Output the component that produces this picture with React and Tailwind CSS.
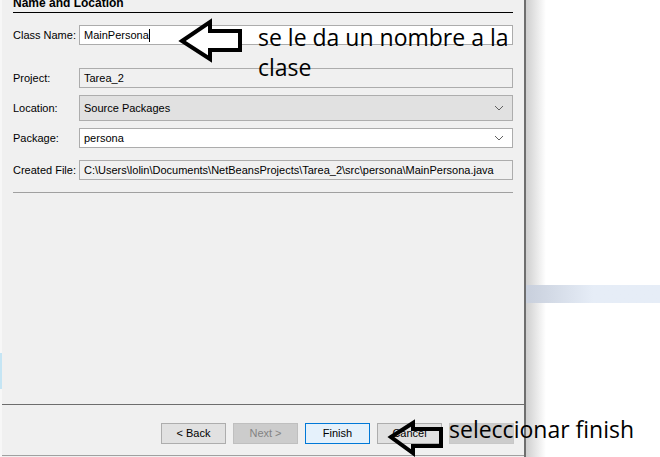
import React from "react";

const lbl = "w-[66px] shrink-0 whitespace-nowrap";
const field = "flex-1 min-w-0 h-[20px] border border-[#acacac] flex items-center px-[4px] whitespace-nowrap overflow-hidden";

function Chevron() {
  return (
    <svg width="10" height="6" viewBox="0 0 10 6" className="ml-auto mr-[4px] shrink-0">
      <path d="M1 1 L5 5 L9 1" fill="none" stroke="#606060" strokeWidth="1" />
    </svg>
  );
}

function Btn({ children, cls }) {
  return (
    <div className={"h-[21px] w-[65px] border flex items-center justify-center " + cls}>
      {children}
    </div>
  );
}

export default function App() {
  return (
    <div
      className="relative w-[660px] h-[457px] bg-white overflow-hidden flex text-[11px] text-black"
      style={{ fontFamily: "'Liberation Sans', Arial, sans-serif" }}
    >
      {/* left edge strip */}
      <div className="w-[2px] shrink-0 bg-[#f7f7f7] flex flex-col">
        <div className="h-[353px]" />
        <div className="h-[36px] bg-[#c5e5f4]" />
      </div>

      {/* dialog window */}
      <div className="w-[524px] shrink-0 bg-[#f0f0f0] border-r-2 border-[#6e6e6e] flex flex-col">
        <div className="px-[11px] flex flex-col">
          <div className="mt-[-3px] h-[16px] font-bold text-[12px] border-b border-black leading-[13px]">
            Name and Location
          </div>
          <div className="flex items-center mt-[12px]">
            <span className={lbl}>Class Name:</span>
            <div className={field + " bg-white"}>
              MainPersona<span className="w-px h-[13px] bg-black" />
            </div>
          </div>
          <div className="flex items-center mt-[23px]">
            <span className={lbl}>Project:</span>
            <div className={field + " bg-[#f0f0f0]"}>Tarea_2</div>
          </div>
          <div className="flex items-center mt-[7px]">
            <span className={lbl}>Location:</span>
            <div className="flex-1 h-[26px] border border-[#adadad] bg-[#e1e1e1] flex items-center px-[4px]">
              Source Packages
              <Chevron />
            </div>
          </div>
          <div className="flex items-center mt-[7px]">
            <span className={lbl}>Package:</span>
            <div className={field + " bg-white"}>
              persona
              <Chevron />
            </div>
          </div>
          <div className="flex items-center mt-[12px]">
            <span className={lbl}>Created File:</span>
            <div className={field + " bg-[#f0f0f0]"}>
              C:\Users\lolin\Documents\NetBeansProjects\Tarea_2\src\persona\MainPersona.java
            </div>
          </div>
          <div className="mt-[12px] h-px bg-[#a0a0a0]" />
        </div>

        <div className="flex-1" />
        <div className="h-px bg-[#6d6d6d]" />
        <div className="flex gap-[7px] pl-[159px] mt-[18px]">
          <Btn cls="border-[#adadad] bg-[#e1e1e1]">&lt; Back</Btn>
          <Btn cls="border-[#bfbfbf] bg-[#cccccc] text-[#838383]">Next &gt;</Btn>
          <Btn cls="border-[#0078d7] bg-[#e5f1fb]">Finish</Btn>
          <Btn cls="border-[#adadad] bg-[#e1e1e1]">Cancel</Btn>
          <Btn cls="border-[#c8c8c8] bg-[#cccccc]"> </Btn>
        </div>
        <div className="mt-[11px] h-px bg-[#a0a0a0]" />
        <div className="h-[1px]" />
      </div>

      {/* right backdrop */}
      <div className="flex-1 relative">
        <div className="absolute left-0 top-0 bottom-0 w-[20px] bg-gradient-to-r from-[#cfcfcf] to-white" />
        <div className="absolute left-0 right-0 top-[285px] h-[18px] bg-gradient-to-r from-[#c8cfdc] via-[#e6edf7] to-[#e6edf7]" />
      </div>

      {/* annotations */}
      <svg className="absolute left-0 top-0" width="660" height="457" viewBox="0 0 660 457">
        <path
          d="M182 41 L210 22 L210 31 L240 31 L240 50 L210 50 L210 59 Z"
          fill="white"
          stroke="black"
          strokeWidth="4"
          strokeLinejoin="miter"
        />
        <path
          d="M391 437 L413 423 L413 429 L441 429 L441 446 L413 446 L413 453 Z"
          fill="none"
          stroke="black"
          strokeWidth="4"
          strokeLinejoin="miter"
        />
      </svg>
      <div
        className="absolute left-[258px] top-[22px] text-[23px] leading-[30px] text-black"
        style={{ fontFamily: "'Open Sans', sans-serif" }}
      >
        se le da un nombre a la
        <br />
        clase
      </div>
      <div
        className="absolute left-[449px] top-[413px] text-[23px] leading-[32px] text-black"
        style={{ fontFamily: "'Open Sans', sans-serif" }}
      >
        seleccionar finish
      </div>
    </div>
  );
}
